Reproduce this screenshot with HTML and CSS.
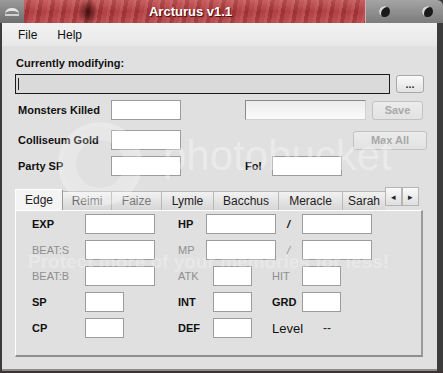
FILE: index.html
```html
<!DOCTYPE html>
<html lang="en">
<head>
    <meta charset="UTF-8">
    <title>Arcturus v1.1</title>
    <link rel="stylesheet" href="styles.css">
</head>
<body>

<div class="window">
    <div class="titlebar">
        <div class="sys-icon"><span class="sys-glyph"></span></div>
        <div class="title">Arcturus v1.1</div>
        <div class="controls">
            <span class="knob"></span>
            <span class="knob"></span>
        </div>
    </div>

    <div class="menubar">
        <span class="menu-item">File</span>
        <span class="menu-item">Help</span>
    </div>

    <div class="content">
        <div class="caption">Currently modifying:</div>
        <div class="file-row">
            <div class="path-box"><span class="caret"></span></div>
            <button class="btn btn-browse">...</button>
        </div>

        <div class="form-row">
            <span class="label">Monsters Killed</span>
            <span class="field"></span>
            <span class="field field-disabled"></span>
            <button class="btn btn-save" disabled>Save</button>
        </div>
        <div class="form-row row-gold">
            <span class="label">Colliseum Gold</span>
            <span class="field"></span>
            <button class="btn btn-max" disabled>Max All</button>
        </div>
        <div class="form-row row-sp">
            <span class="label">Party SP</span>
            <span class="field"></span>
            <span class="label label-fol">Fol</span>
            <span class="field"></span>
        </div>

        <div class="tabs">
            <span class="tab active">Edge</span>
            <span class="tab t-reimi">Reimi</span>
            <span class="tab t-faize">Faize</span>
            <span class="tab t-lymle">Lymle</span>
            <span class="tab t-bacchus">Bacchus</span>
            <span class="tab t-meracle">Meracle</span>
            <span class="tab t-sarah">Sarah</span>
            <span class="arrow">&#9666;</span>
            <span class="arrow">&#9656;</span>
        </div>

        <div class="panel">
            <div class="stat-row">
                <span class="s-label c1">EXP</span>
                <span class="field w70"></span>
                <span class="s-label c2">HP</span>
                <span class="field w70"></span>
                <span class="s-label c3 slash">/</span>
                <span class="field w70"></span>
            </div>
            <div class="stat-row">
                <span class="s-label c1 dim">BEAT:S</span>
                <span class="field w70"></span>
                <span class="s-label c2 dim">MP</span>
                <span class="field w70"></span>
                <span class="s-label c3 slash dim">/</span>
                <span class="field w70"></span>
            </div>
            <div class="stat-row">
                <span class="s-label c1 dim">BEAT:B</span>
                <span class="field w70"></span>
                <span class="s-label c2b dim">ATK</span>
                <span class="field w39"></span>
                <span class="s-label c3b dim">HIT</span>
                <span class="field w39"></span>
            </div>
            <div class="stat-row">
                <span class="s-label c1">SP</span>
                <span class="field w39 after-short"></span>
                <span class="s-label c2b">INT</span>
                <span class="field w39"></span>
                <span class="s-label c3b">GRD</span>
                <span class="field w39"></span>
            </div>
            <div class="stat-row">
                <span class="s-label c1">CP</span>
                <span class="field w39 after-short"></span>
                <span class="s-label c2b">DEF</span>
                <span class="field w39"></span>
                <span class="level">Level</span>
                <span class="level-value">--</span>
            </div>
        </div>
    </div>

    <div class="watermark">
        <span class="wm-ring"></span>
        <span class="wm-logo">photobucket</span>
        <span class="wm-note">Protect more of your memories for less!</span>
    </div>
</div>

</body>
</html>
```

FILE: styles.css
```css
* {
    box-sizing: border-box;
    margin: 0;
    padding: 0;
}

body {
    width: 443px;
    height: 373px;
    background: #3c3434;
    font-family: "Liberation Sans", Arial, sans-serif;
    overflow: hidden;
}

.window {
    position: relative;
    width: 443px;
    height: 371px;
    background: #3c3c3c;
}

/* Title bar */
.titlebar {
    display: flex;
    height: 23px;
}

.sys-icon {
    width: 24px;
    background: linear-gradient(#9a9a9a, #6e6e6e);
    display: flex;
    align-items: center;
    justify-content: center;
}

.sys-glyph {
    width: 14px;
    height: 8px;
    border-top: 3px solid #e6e6e6;
    border-bottom: 2px solid #d0d0d0;
    border-radius: 6px 6px 0 0;
}

.title {
    flex: 1;
    display: flex;
    align-items: center;
    justify-content: center;
    padding-right: 8px;
    color: #fff;
    font-size: 13px;
    font-weight: bold;
    text-shadow: 1px 1px 1px #3a0a0a;
    background:
        radial-gradient(ellipse 10px 14px at 64px 12px, rgba(40, 0, 0, 0.75), rgba(40, 0, 0, 0)),
        repeating-linear-gradient(100deg, rgba(255, 170, 170, 0.18) 0 3px, rgba(90, 10, 10, 0.15) 3px 7px, rgba(255, 140, 140, 0.1) 7px 12px),
        linear-gradient(#c05a5c, #a8383c 50%, #b44a4c);
}

.controls {
    width: 78px;
    display: flex;
    align-items: center;
    justify-content: space-between;
    padding: 0 10px 0 13px;
    border-left: 1px solid #d9a8a8;
    border-radius: 0 6px 0 0;
    background: linear-gradient(#a4a4a4, #7c7c7c);
}

.knob {
    width: 11px;
    height: 11px;
    border-radius: 50%;
    background: #1a1a1a;
    box-shadow: inset 3px 2px 0 -1px #d8d8d8;
}

/* Menu */
.menubar {
    display: flex;
    gap: 20px;
    height: 23px;
    align-items: center;
    padding-left: 16px;
    margin: 0 6px 0 2px;
    font-size: 12px;
    color: #111;
    background: linear-gradient(#f2f2f2, #e8e8e8);
}

.content {
    margin: 0 6px 0 2px;
    height: 325px;
    padding: 11px 0 0 13px;
    background: #e0e0e0;
    border-bottom: 2px solid #8c8c8c;
}

.caption {
    font-size: 11px;
    font-weight: bold;
    color: #111;
    line-height: 13px;
    margin-left: 1px;
}

.file-row {
    display: flex;
    align-items: center;
    gap: 6px;
    margin-top: 4px;
}

.path-box {
    width: 375px;
    height: 20px;
    background: #dadada;
    border: 1px solid #1c1c1c;
    padding: 3px 2px;
}

.caret {
    display: block;
    width: 1px;
    height: 12px;
    background: #222;
}

.btn {
    font-family: "Liberation Sans", Arial, sans-serif;
    font-size: 11px;
    font-weight: bold;
    border: 1px solid #a8a8a8;
    border-radius: 3px;
    background: linear-gradient(#fafafa, #e2e2e2);
    color: #333;
}

.btn-browse {
    width: 28px;
    height: 18px;
    line-height: 10px;
}

.btn:disabled {
    color: #a8a8a8;
    border-color: #c2c2c2;
    background: linear-gradient(#ececec, #e2e2e2);
}

.form-row {
    display: flex;
    align-items: center;
    height: 20px;
    margin-top: 6px;
    padding-left: 3px;
}

.row-gold {
    margin-top: 10px;
}

.row-sp {
    margin-top: 6px;
}

.label {
    width: 93px;
    font-size: 11px;
    font-weight: bold;
    color: #111;
}

.field {
    display: block;
    width: 70px;
    height: 20px;
    background: #fff;
    border: 1px solid #9c9c9c;
}

.field-disabled {
    width: 121px;
    margin-left: 64px;
    background: linear-gradient(#ececec, #fafafa);
    border-color: #8a8a8a #d0d0d0 #d0d0d0 #8a8a8a;
}

.btn-save {
    width: 51px;
    height: 19px;
    margin-left: 6px;
}

.btn-max {
    width: 74px;
    height: 19px;
    margin-left: auto;
    margin-right: 10px;
}

.label-fol {
    width: 27px;
    margin-left: 64px;
}

/* Tabs */
.tabs {
    display: flex;
    align-items: flex-end;
    height: 21px;
    margin-top: 13px;
    font-size: 12px;
    color: #222;
}

.tab {
    height: 19px;
    padding-top: 2px;
    text-align: center;
    background: linear-gradient(#f2f2f2, #d6d6d6);
    border: 1px solid #b8b8b8;
    border-bottom: none;
    border-left: none;
}

.tab.active {
    height: 21px;
    padding-top: 3px;
    width: 48px;
    background: #f4f4f4;
    border-left: 1px solid #ffffff;
    border-color: #ffffff #9a9a9a transparent #ffffff;
}

.t-reimi { width: 49px; color: #6a6a6a; }
.t-faize { width: 50px; color: #7a7a7a; }
.t-lymle { width: 52px; }
.t-bacchus { width: 65px; }
.t-meracle { width: 64px; }

.t-sarah {
    width: 42px;
    text-align: left;
    padding-left: 5px;
    overflow: hidden;
    border-right: none;
}

.arrow {
    align-self: flex-start;
    width: 17px;
    height: 19px;
    margin-top: -2px;
    font-size: 9px;
    line-height: 18px;
    text-align: center;
    color: #222;
    background: linear-gradient(#fafafa, #dedede);
    border: 1px solid #b4b4b4;
}

.panel {
    width: 408px;
    height: 147px;
    padding-top: 3px;
    background: #e0e0e0;
    border-top: 1px solid #ffffff;
    border-left: 1px solid #ffffff;
    border-right: 2px solid #9a9a9a;
    border-bottom: 2px solid #8e8e8e;
}

.stat-row {
    display: flex;
    align-items: center;
    height: 20px;
    margin-bottom: 6px;
}

.s-label {
    font-size: 11px;
    font-weight: bold;
    color: #111;
}

.s-label.dim {
    font-weight: normal;
    color: #8e8e8e;
}

.c1 { width: 69px; padding-left: 16px; }
.c2 { width: 51px; padding-left: 23px; }
.c3 { width: 26px; padding-left: 11px; }
.c2b { width: 58px; padding-left: 23px; }
.c3b { width: 50px; padding-left: 20px; }

.slash {
    font-style: italic;
}

.w70 { width: 70px; }
.w39 { width: 39px; }

.after-short { margin-right: 31px; }

.level {
    width: 51px;
    padding-left: 20px;
    box-sizing: content-box;
    font-size: 13px;
    color: #111;
}

.level-value {
    font-size: 12px;
    color: #222;
}

/* Faint watermark lying over the screenshot */
.watermark {
    position: absolute;
    left: 0;
    top: 0;
    width: 443px;
    height: 371px;
    overflow: hidden;
    pointer-events: none;
}

.wm-ring {
    position: absolute;
    left: 58px;
    top: 122px;
    width: 84px;
    height: 84px;
    border: 5px solid rgba(255, 255, 255, 0.3);
    border-radius: 50%;
    box-shadow: inset 0 0 0 9px rgba(224, 224, 224, 0), inset 0 0 0 13px rgba(255, 255, 255, 0.22);
}

.wm-logo {
    position: absolute;
    left: 163px;
    top: 132px;
    font-family: "Liberation Sans", Arial, sans-serif;
    font-size: 42px;
    line-height: 48px;
    color: rgba(255, 255, 255, 0.35);
}

.wm-note {
    position: absolute;
    left: 28px;
    top: 252px;
    font-family: "Liberation Sans", Arial, sans-serif;
    font-size: 19px;
    line-height: 20px;
    font-weight: bold;
    color: rgba(255, 255, 255, 0.28);
    white-space: nowrap;
}
```
